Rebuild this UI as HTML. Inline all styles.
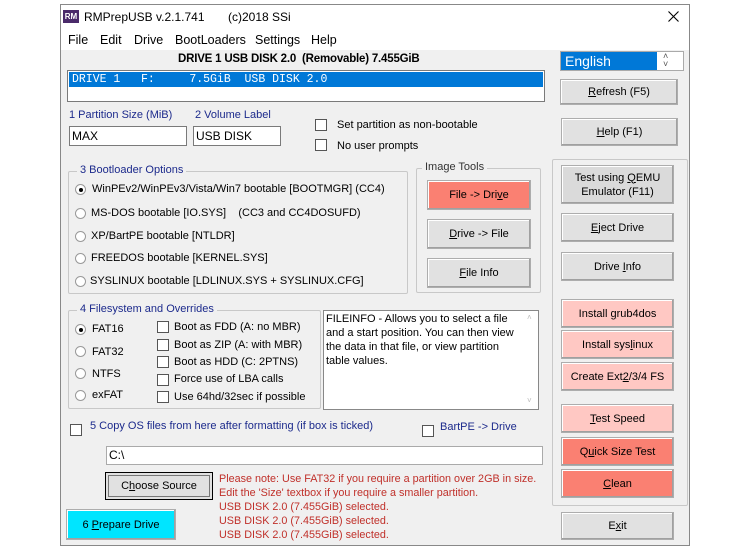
<!DOCTYPE html>
<html><head><meta charset="utf-8"><style>
*{box-sizing:border-box;margin:0;padding:0}
body{width:750px;height:550px;background:#fff;position:relative;overflow:hidden;font-family:"Liberation Sans",Arial,sans-serif;font-size:11px;color:#000}
.a{position:absolute;white-space:nowrap}
.win{position:absolute;left:60px;top:4px;width:630px;height:542px;border:1px solid #888;background:#f0f0f0}
.title{position:absolute;left:61px;top:5px;width:628px;height:25px;background:#fff}
.menu{position:absolute;left:61px;top:30px;width:628px;height:20px;background:#fff}
.btn{position:absolute;background:#e1e1e1;border:1px solid #adadad;box-shadow:inset -1px -1px 0 #a0a0a0,inset 1px 1px 0 #fff;display:flex;align-items:center;justify-content:center;text-align:center;font-size:11px;line-height:14px}
.pink{background:#ffc8c3}
.sal{background:#fa8072}
.grp{position:absolute;border:1px solid #c8c8c8;border-radius:2px}
.lg{position:absolute;top:-8px;left:8px;background:#f0f0f0;padding:0 3px;color:#1c2a8c}
.inp{position:absolute;background:#fff;border:1px solid #7a7a7a;padding-left:2px;font-size:12px;line-height:18px}
.cb{position:absolute;width:12px;height:12px;background:#fff;border:1px solid #555}
.rd{position:absolute;width:11px;height:11px;border-radius:50%;border:1px solid #999;background:#fff}
.rd.on::after{content:"";position:absolute;left:2.5px;top:2.5px;width:4px;height:4px;border-radius:50%;background:#000}
.blue{color:#1c2a8c}
.red{color:#c0302a}
u{text-decoration:underline}
</style></head><body>
<div class="win"></div>
<div class="title"></div>
<div class="a" style="left:63px;top:10px;width:16px;height:13px;background:#4a2a6a;color:#fff;font-size:8px;font-weight:bold;line-height:13px;text-align:center">RM</div>
<div class="a" style="left:84px;top:10px;font-size:12px">RMPrepUSB v.2.1.741</div>
<div class="a" style="left:228px;top:10px;font-size:12px">(c)2018 SSi</div>
<svg class="a" style="left:668px;top:11px" width="11" height="11"><path d="M0.5 0.5L10.5 10.5M10.5 0.5L0.5 10.5" stroke="#000" stroke-width="1.1"/></svg>
<div class="menu"></div>
<div class="a" style="left:68px;top:33px;font-size:12.5px">File</div>
<div class="a" style="left:100px;top:33px;font-size:12.5px">Edit</div>
<div class="a" style="left:134px;top:33px;font-size:12.5px">Drive</div>
<div class="a" style="left:175px;top:33px;font-size:12.5px">BootLoaders</div>
<div class="a" style="left:255px;top:33px;font-size:12.5px">Settings</div>
<div class="a" style="left:311px;top:33px;font-size:12.5px">Help</div>

<div class="a" style="left:178px;top:53px;font-size:11.5px;font-weight:bold;letter-spacing:-0.2px">DRIVE 1 USB DISK 2.0&nbsp; (Removable) 7.455GiB</div>
<div class="a" style="left:67px;top:70px;width:478px;height:32px;background:#fff;border:1px solid #7a7a7a"></div>
<div class="a" style="left:69px;top:72px;width:474px;height:15px;background:#0078d7;color:#fff;font-family:'Liberation Mono',monospace;font-size:11.5px;line-height:15px;padding-left:3px;white-space:pre">DRIVE 1   F:     7.5GiB  USB DISK 2.0</div>

<div class="a" style="left:560px;top:51px;width:124px;height:20px;background:#fff;border:1px solid #aaa"></div>
<div class="a" style="left:561px;top:52px;width:96px;height:18px;background:#0078d7;color:#fff;font-size:14px;line-height:18px;padding-left:4px">English</div>
<div class="a" style="left:663px;top:52px;font-size:9px;line-height:8px;color:#555">˄<br>˅</div>
<div class="btn" style="left:560px;top:79px;width:118px;height:26px"><span><u>R</u>efresh (F5)</span></div>

<div class="a blue" style="left:69px;top:109px">1 Partition Size (MiB)</div>
<div class="a blue" style="left:195px;top:109px">2 Volume Label</div>
<div class="inp" style="left:69px;top:126px;width:118px;height:20px">MAX</div>
<div class="inp" style="left:193px;top:126px;width:88px;height:20px">USB DISK</div>
<div class="cb" style="left:315px;top:119px"></div>
<div class="a" style="left:337px;top:119px">Set partition as non-bootable</div>
<div class="cb" style="left:315px;top:139px"></div>
<div class="a" style="left:337px;top:140px">No user prompts</div>
<div class="btn" style="left:561px;top:118px;width:117px;height:28px"><span><u>H</u>elp (F1)</span></div>

<div class="grp" style="left:68px;top:171px;width:340px;height:123px"><div class="lg">3 Bootloader Options</div></div>
<div class="rd on" style="left:75px;top:184px"></div><div class="a" style="left:92px;top:183px">WinPEv2/WinPEv3/Vista/Win7 bootable [BOOTMGR] (CC4)</div>
<div class="rd" style="left:75px;top:208px"></div><div class="a" style="left:91px;top:207px">MS-DOS bootable [IO.SYS]&nbsp;&nbsp;&nbsp; (CC3 and CC4DOSUFD)</div>
<div class="rd" style="left:75px;top:231px"></div><div class="a" style="left:91px;top:230px">XP/BartPE bootable [NTLDR]</div>
<div class="rd" style="left:75px;top:253px"></div><div class="a" style="left:91px;top:252px">FREEDOS bootable [KERNEL.SYS]</div>
<div class="rd" style="left:75px;top:276px"></div><div class="a" style="left:90px;top:275px">SYSLINUX bootable [LDLINUX.SYS + SYSLINUX.CFG]</div>

<div class="grp" style="left:416px;top:168px;width:125px;height:125px"><div class="lg" style="color:#333;left:5px">Image Tools</div></div>
<div class="btn sal" style="left:427px;top:180px;width:104px;height:30px"><span>File -&gt; Dri<u>v</u>e</span></div>
<div class="btn" style="left:427px;top:219px;width:104px;height:30px"><span><u>D</u>rive -&gt; File</span></div>
<div class="btn" style="left:427px;top:258px;width:104px;height:30px"><span><u>F</u>ile Info</span></div>

<div class="grp" style="left:552px;top:159px;width:136px;height:347px"></div>
<div class="btn" style="left:561px;top:165px;width:113px;height:39px;background:#dadada"><span>Test using <u>Q</u>EMU<br>Emulator (F11)</span></div>
<div class="btn" style="left:561px;top:213px;width:113px;height:29px"><span><u>E</u>ject Drive</span></div>
<div class="btn" style="left:561px;top:252px;width:113px;height:29px"><span>Drive <u>I</u>nfo</span></div>
<div class="btn pink" style="left:561px;top:299px;width:113px;height:29px"><span>Install <u>g</u>rub4dos</span></div>
<div class="btn pink" style="left:561px;top:330px;width:113px;height:29px"><span>Install sys<u>l</u>inux</span></div>
<div class="btn pink" style="left:561px;top:362px;width:113px;height:29px"><span>Create Ext<u>2</u>/3/4 FS</span></div>
<div class="btn pink" style="left:561px;top:404px;width:113px;height:29px"><span><u>T</u>est Speed</span></div>
<div class="btn sal" style="left:561px;top:437px;width:113px;height:29px"><span>Q<u>u</u>ick Size Test</span></div>
<div class="btn sal" style="left:561px;top:469px;width:113px;height:29px"><span><u>C</u>lean</span></div>
<div class="btn" style="left:561px;top:512px;width:113px;height:28px"><span>E<u>x</u>it</span></div>

<div class="grp" style="left:68px;top:310px;width:253px;height:99px"><div class="lg">4 Filesystem and Overrides</div></div>
<div class="rd on" style="left:75px;top:324px"></div><div class="a" style="left:92px;top:323px">FAT16</div>
<div class="rd" style="left:75px;top:346px"></div><div class="a" style="left:92px;top:346px">FAT32</div>
<div class="rd" style="left:75px;top:368px"></div><div class="a" style="left:92px;top:368px">NTFS</div>
<div class="rd" style="left:75px;top:390px"></div><div class="a" style="left:92px;top:389px">exFAT</div>
<div class="cb" style="left:157px;top:321px"></div><div class="a" style="left:174px;top:321px">Boot as FDD (A: no MBR)</div>
<div class="cb" style="left:157px;top:339px"></div><div class="a" style="left:174px;top:339px">Boot as ZIP (A: with MBR)</div>
<div class="cb" style="left:157px;top:356px"></div><div class="a" style="left:174px;top:356px">Boot as HDD (C: 2PTNS)</div>
<div class="cb" style="left:157px;top:374px"></div><div class="a" style="left:174px;top:373px">Force use of LBA calls</div>
<div class="cb" style="left:157px;top:391px"></div><div class="a" style="left:174px;top:391px">Use 64hd/32sec if possible</div>

<div class="a" style="left:323px;top:310px;width:216px;height:100px;background:#fff;border:1px solid #888"></div>
<div class="a" style="left:326px;top:312px;font-size:11px;line-height:14px;white-space:normal;width:196px">FILEINFO - Allows you to select a file and a start position. You can then view the data in that file, or view partition table values.</div>
<div class="a" style="left:527px;top:313px;font-size:8px;color:#bbb">˄</div>
<div class="a" style="left:527px;top:396px;font-size:8px;color:#bbb">˅</div>

<div class="cb" style="left:70px;top:424px"></div>
<div class="a blue" style="left:90px;top:420px">5 Copy OS files from here after formatting (if box is ticked)</div>
<div class="cb" style="left:422px;top:425px"></div>
<div class="a blue" style="left:440px;top:421px">BartPE -&gt; Drive</div>
<div class="inp" style="left:106px;top:446px;width:437px;height:19px;border-color:#aaa;line-height:17px">C:\</div>
<div class="btn" style="left:105px;top:472px;width:108px;height:28px;border:1px solid #000;box-shadow:inset 0 0 0 2px #e1e1e1,inset 0 0 0 3px #777"><span>C<u>h</u>oose Source</span></div>
<div class="a red" style="left:219px;top:472px;line-height:14px;font-size:10.8px">Please note: Use FAT32 if you require a partition over 2GB in size.<br>Edit the 'Size' textbox if you require a smaller partition.<br>USB DISK 2.0 (7.455GiB) selected.<br>USB DISK 2.0 (7.455GiB) selected.<br>USB DISK 2.0 (7.455GiB) selected.</div>
<div class="btn" style="left:66px;top:509px;width:110px;height:31px;background:#00e5ff"><span>6 <u>P</u>repare Drive</span></div>
</body></html>
